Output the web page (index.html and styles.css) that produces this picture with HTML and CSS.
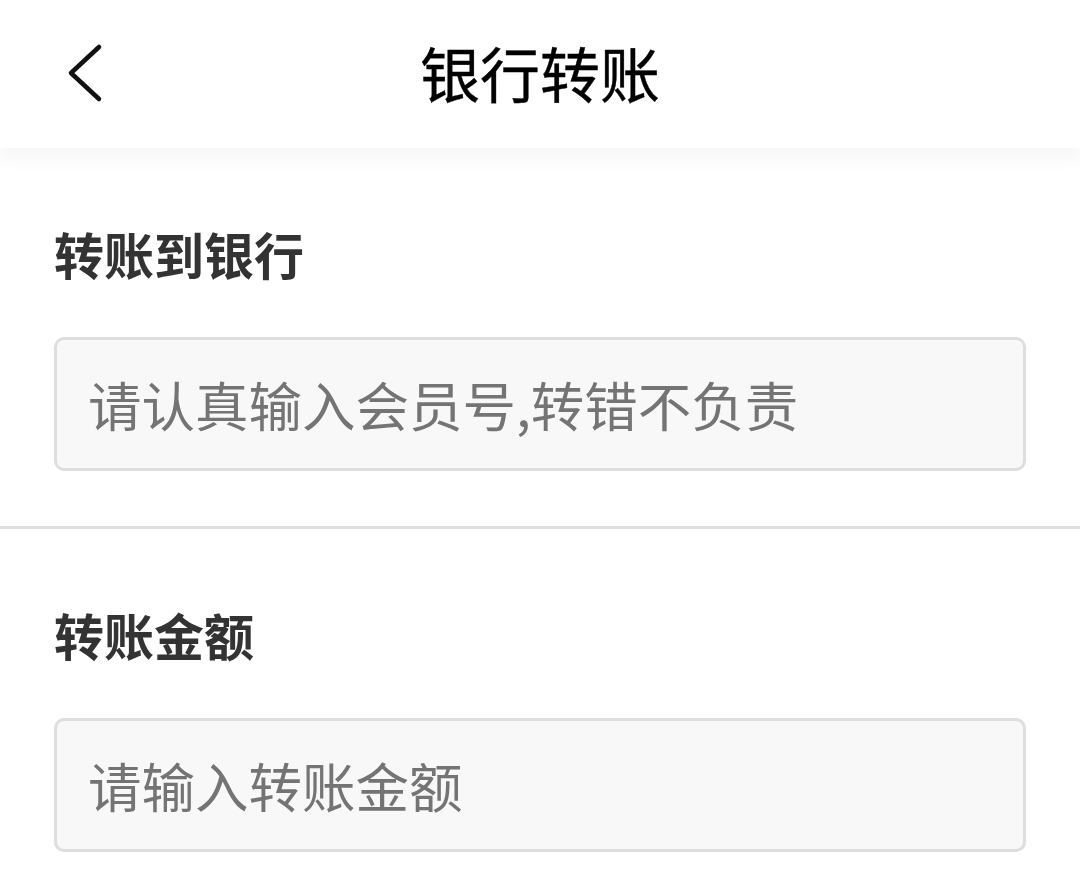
FILE: index.html
```html
<!DOCTYPE html>
<html>
<head>
    <meta charset="utf-8">
    <title>银行转账</title>
    <link rel="stylesheet" href="styles.css">
</head>
<body>
    <header class="topbar">
        <a class="back" href="#">
            <svg width="48" height="66" viewBox="0 0 48 66">
                <polyline points="39,7 11,33 39,59" fill="none" stroke="#111" stroke-width="4.5" stroke-linecap="round" stroke-linejoin="round"/>
            </svg>
        </a>
        <h1 class="title">银行转账</h1>
        <span></span>
    </header>

    <form class="transfer">
        <div class="section">
            <label class="label" for="member">转账到银行</label>
            <input class="field" type="text" id="member" placeholder="请认真输入会员号,转错不负责">
        </div>
        <div class="section">
            <label class="label" for="amount">转账金额</label>
            <input class="field" type="text" id="amount" placeholder="请输入转账金额">
        </div>
    </form>
</body>
</html>
```

FILE: styles.css
```css
body {
    margin: 0;
    background: #fff;
    font-family: "Noto Sans CJK SC", "Noto Sans", sans-serif;
}
.topbar {
    height: 148px;
    display: grid;
    grid-template-columns: 1fr auto 1fr;
    align-items: center;
    background: #fff;
    box-shadow: 0 6px 22px rgba(30, 30, 60, 0.06);
    position: relative;
    z-index: 1;
}
.back {
    display: flex;
    padding-left: 60px;
    padding-bottom: 2px;
}
.title {
    margin: 0 0 4px;
    font-size: 60px;
    font-weight: 400;
    line-height: 60px;
    color: #000;
    -webkit-text-stroke: 0.4px #000;
}
.transfer {
    margin: 0;
}
.section {
    display: flex;
    flex-direction: column;
    padding: 80px 54px 55px;
    border-bottom: 3px solid #dedede;
}
.section:last-child {
    border-bottom: none;
}
.label {
    font-size: 50px;
    line-height: 50px;
    font-weight: 700;
    color: #333;
    margin-bottom: 59px;
}
.field {
    box-sizing: border-box;
    height: 134px;
    width: 100%;
    padding: 0 31px 2px;
    border: 3px solid #dedede;
    border-radius: 10px;
    background: #f8f8f8;
    font-family: inherit;
    font-size: 53.5px;
    color: #333;
    outline: none;
}
.field::placeholder {
    color: #747474;
}
```
